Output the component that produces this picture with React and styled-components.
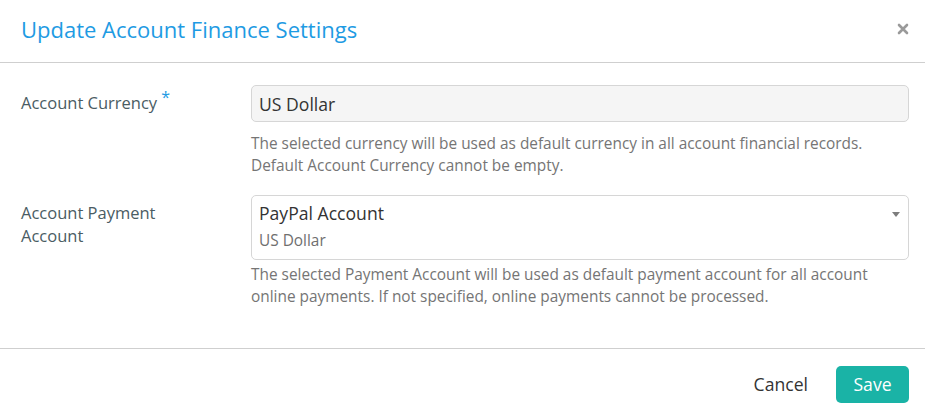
import React from "react";
import styled, { createGlobalStyle } from "styled-components";

const Global = createGlobalStyle`
  html, body { margin: 0; padding: 0; background: #fff; }
  body { font-family: "Open Sans", "Liberation Sans", sans-serif; }
  * { box-sizing: border-box; }
`;

const Modal = styled.div`
  width: 925px;
  height: 416px;
  background: #fff;
  display: flex;
  flex-direction: column;
`;

const Header = styled.div`
  height: 63px;
  border-bottom: 1px solid #cfcfcf;
  display: flex;
  align-items: center;
  justify-content: space-between;
  padding: 0 15px 5px 21px;
`;

const Title = styled.h1`
  margin: 0;
  font-size: 22px;
  font-weight: 400;
  color: #1e9be3;
`;

const Close = styled.button`
  border: 0;
  background: none;
  padding: 0;
  width: 14px;
  height: 14px;
  display: flex;
  align-items: center;
  justify-content: center;
  cursor: pointer;
`;

const Body = styled.div`
  flex: 1;
  padding: 22px 16px 0 21px;
  display: flex;
  flex-direction: column;
  gap: 18px;
  border-bottom: 1px solid #cfcfcf;
`;

const Row = styled.div`
  display: grid;
  grid-template-columns: 230px 1fr;
`;

const Label = styled.label`
  font-size: 16.5px;
  line-height: 23px;
  color: #4a5c63;
  padding-top: ${(p) => p.$top || 6}px;
  width: 190px;
`;

const Star = styled.span`
  color: #1e9be3;
  font-size: 16px;
  position: relative;
  top: -6px;
  margin-left: 4px;
`;

const Field = styled.div`
  display: flex;
  flex-direction: column;
`;

const Input = styled.div`
  height: 37px;
  border: 1px solid #d6d6d6;
  border-radius: 5px;
  background: #f5f5f5;
  display: flex;
  align-items: center;
  padding: 0 7px;
  font-size: 17.6px;
  color: #333;
`;

const Select = styled.div`
  position: relative;
  height: 65px;
  border: 1px solid #d6d6d6;
  border-radius: 5px;
  background: #fff;
  display: flex;
  flex-direction: column;
  padding: 5px 7px 0;
`;

const Primary = styled.div`
  font-size: 17.6px;
  line-height: 24px;
  color: #333;
`;

const Secondary = styled.div`
  margin-top: 4px;
  font-size: 15.4px;
  line-height: 24px;
  color: #6f6f6f;
`;

const Caret = styled.span`
  position: absolute;
  right: 8px;
  top: 16px;
  width: 0;
  height: 0;
  border-left: 4px solid transparent;
  border-right: 4px solid transparent;
  border-top: 5px solid #7d7d7d;
`;

const Help = styled.p`
  margin: ${(p) => p.$mt || 11}px 0 0;
  font-size: 15.4px;
  line-height: 22px;
  color: #757575;
`;

const Footer = styled.div`
  height: 67px;
  display: flex;
  align-items: center;
  justify-content: flex-end;
  gap: 28px;
  padding: 3px 16px 0 0;
`;

const Cancel = styled.button`
  border: 0;
  background: none;
  font-family: inherit;
  font-size: 17.6px;
  color: #333;
  padding: 0;
  cursor: pointer;
`;

const Save = styled.button`
  border: 0;
  background: #1ab3a6;
  color: #fff;
  font-family: inherit;
  font-size: 17.6px;
  border-radius: 5px;
  width: 73px;
  height: 37px;
  cursor: pointer;
`;

export default function App() {
  return (
    <>
      <Global />
      <Modal>
        <Header>
          <Title>Update Account Finance Settings</Title>
          <Close aria-label="Close">
            <svg width="12" height="12" viewBox="0 0 12 12">
              <path d="M2 2 L10 10 M10 2 L2 10" stroke="#9a9a9a" strokeWidth="2.6" strokeLinecap="round" />
            </svg>
          </Close>
        </Header>
        <Body>
          <Row>
            <Label $top={6}>
              Account Currency<Star>*</Star>
            </Label>
            <Field>
              <Input>US Dollar</Input>
              <Help $mt={11}>
                The selected currency will be used as default currency in all account financial records.
                <br />
                Default Account Currency cannot be empty.
              </Help>
            </Field>
          </Row>
          <Row>
            <Label $top={6}>Account Payment Account</Label>
            <Field>
              <Select>
                <Primary>PayPal Account</Primary>
                <Secondary>US Dollar</Secondary>
                <Caret />
              </Select>
              <Help $mt={4}>
                The selected Payment Account will be used as default payment account for all account
                <br />
                online payments. If not specified, online payments cannot be processed.
              </Help>
            </Field>
          </Row>
        </Body>
        <Footer>
          <Cancel>Cancel</Cancel>
          <Save>Save</Save>
        </Footer>
      </Modal>
    </>
  );
}
